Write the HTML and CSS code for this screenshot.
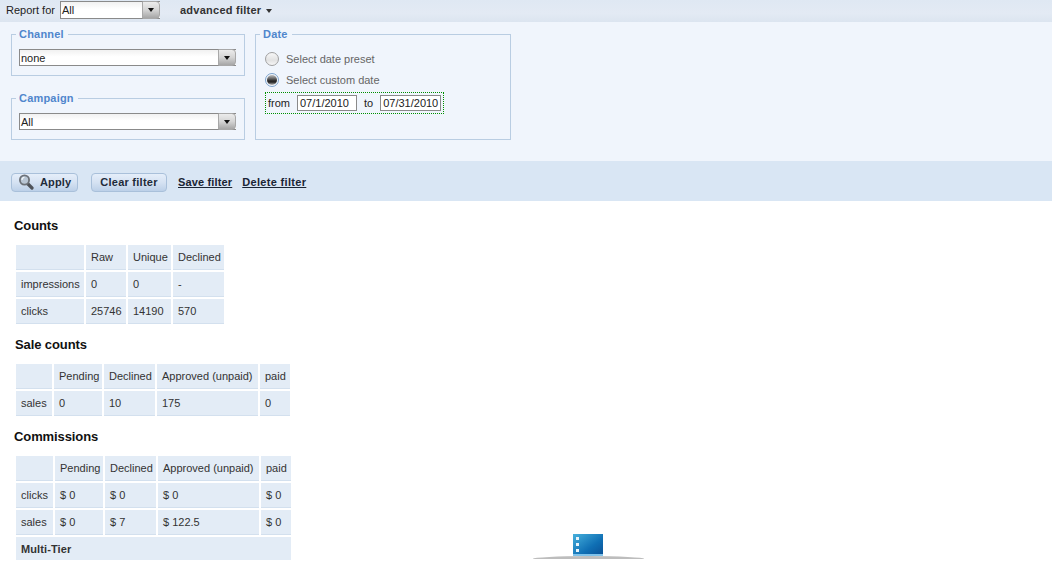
FILE: index.html
```html
<!DOCTYPE html>
<html lang="en">
<head>
<meta charset="utf-8">
<title>Report</title>
<link rel="stylesheet" href="styles.css">
</head>
<body>
<div class="topbar">
  <span class="report-label">Report for</span>
  <div class="combo combo-top"><span class="combo-value">All</span><span class="combo-btn"><i class="caret"></i></span></div>
  <span class="adv">advanced filter <i class="caret adv-caret"></i></span>
</div>
<div class="panel">
  <div class="left-col">
    <fieldset class="fs fs-channel">
      <legend>Channel</legend>
      <div class="combo combo-wide"><span class="combo-value">none</span><span class="combo-btn"><i class="caret"></i></span></div>
    </fieldset>
    <fieldset class="fs fs-campaign">
      <legend>Campaign</legend>
      <div class="combo combo-wide"><span class="combo-value">All</span><span class="combo-btn"><i class="caret"></i></span></div>
    </fieldset>
  </div>
  <fieldset class="fs fs-date">
    <legend>Date</legend>
    <div class="radio-row"><span class="radio"></span><span>Select date preset</span></div>
    <div class="radio-row"><span class="radio radio-on"></span><span>Select custom date</span></div>
    <div class="date-range">
      <span>from</span><span class="date-input d1">07/1/2010</span>
      <span class="to">to</span><span class="date-input d2">07/31/2010</span>
    </div>
  </fieldset>
</div>
<div class="actions">
  <button class="btn btn-apply" type="button">
    <svg class="search" width="16" height="16" viewBox="0 0 16 16"><path d="M9.5 9.5l4.5 4.5" stroke="#4f5359" stroke-width="3.2" stroke-linecap="round"/><circle cx="6.5" cy="6" r="4.6" fill="#b9c6d4" stroke="#6d7279" stroke-width="1.8"/><path d="M4 6a2.6 2.6 0 0 1 2.4-2.6" fill="none" stroke="#f2f6fa" stroke-width="1.2"/></svg>
    <span>Apply</span>
  </button>
  <button class="btn btn-clear" type="button">Clear filter</button>
  <a class="link link-save" href="#">Save filter</a>
  <a class="link link-delete" href="#">Delete filter</a>
</div>
<main class="content">
  <h2 class="h h-counts">Counts</h2>
  <table class="grid t-counts">
    <tr><td class="c1"></td><td class="c2">Raw</td><td class="c3">Unique</td><td class="c4">Declined</td></tr>
    <tr><td>impressions</td><td>0</td><td>0</td><td>-</td></tr>
    <tr><td>clicks</td><td>25746</td><td>14190</td><td>570</td></tr>
  </table>
  <h2 class="h h-sale">Sale counts</h2>
  <table class="grid t-sale">
    <tr><td class="s1"></td><td class="s2">Pending</td><td class="s3">Declined</td><td class="s4">Approved (unpaid)</td><td class="s5">paid</td></tr>
    <tr><td>sales</td><td>0</td><td>10</td><td>175</td><td>0</td></tr>
  </table>
  <h2 class="h h-comm">Commissions</h2>
  <table class="grid t-comm">
    <tr><td class="m1"></td><td class="m2">Pending</td><td class="m3">Declined</td><td class="m4">Approved (unpaid)</td><td class="m5">paid</td></tr>
    <tr><td>clicks</td><td>$ 0</td><td>$ 0</td><td>$ 0</td><td>$ 0</td></tr>
    <tr><td>sales</td><td>$ 0</td><td>$ 7</td><td>$ 122.5</td><td>$ 0</td></tr>
    <tr><td colspan="5" class="tier">Multi-Tier</td></tr>
  </table>
</main>
<div class="loader">
  <svg width="30" height="22" viewBox="0 0 30 22"><defs><linearGradient id="lg" x1="0" y1="0" x2="1" y2="1"><stop offset="0" stop-color="#46b0dc"/><stop offset="0.6" stop-color="#0f6fb4"/><stop offset="1" stop-color="#0a4f94"/></linearGradient></defs><rect width="30" height="22" fill="url(#lg)"/><rect y="20" width="30" height="2" fill="#7fc2ea"/><rect x="3" y="3" width="3" height="3" fill="#e8f4fb"/><rect x="3" y="9" width="3" height="3" fill="#e8f4fb"/><rect x="3" y="15" width="3" height="3" fill="#e8f4fb"/></svg>
  <div class="loader-shadow"></div>
</div>
</body>
</html>
```
FILE: styles.css
```css
* { box-sizing: border-box; }
html, body { margin: 0; padding: 0; }
body {
  width: 1052px; height: 562px; overflow: hidden; position: relative;
  background: #fff; color: #222;
  font: 11px "Liberation Sans", Arial, sans-serif;
}
.topbar {
  height: 22px; display: flex; align-items: center; padding: 0 0 2px 6px;
  background: linear-gradient(#dfe8f3, #e3eaf4 60%, #dce5f0);
}
.report-label { width: 54px; color: #222; }
.combo {
  display: flex; height: 18px; background: linear-gradient(#f1f1f1, #fff 45%, #fff);
  border: 1px solid #8a8a8a; border-right: 0; position: relative;
}
.combo-top { width: 100px; }
.combo-wide { width: 217px; height: 17px; }
.combo-value { flex: 1; padding: 0 0 0 1px; line-height: 16px; color: #222; }
.combo-btn {
  width: 18px; margin: -1px 0; border: 1px solid #a8a8a8; border-radius: 1px 4px 4px 1px;
  background: linear-gradient(#ececec, #d4d4d4 50%, #a6a6a6);
  display: flex; align-items: center; justify-content: center;
}
.caret { display: block; width: 0; height: 0; border: 3.5px solid transparent; border-top: 4px solid #111; border-bottom: 0; }
.adv { margin-left: 20px; font-weight: bold; color: #333; display: flex; align-items: center; gap: 5px; font-size: 11px; letter-spacing: 0.25px; }
.adv-caret { border-width: 3.5px; border-top-width: 4px; border-bottom: 0; border-top-color: #333; margin-top: 1px; }

.panel {
  height: 139px; background: #f0f5fc; display: flex; align-items: flex-start; gap: 10px;
  padding: 5px 0 0 11px;
}
.left-col { display: flex; flex-direction: column; gap: 15px; }
.fs {
  margin: 0; border: 1px solid #b9cde2; padding: 0; min-width: 0;
}
.fs legend {
  margin-left: -3px; padding: 0 4px 0 3px; color: #4f86cc; font-weight: bold; font-size: 11px; line-height: 14px;
  letter-spacing: 0.2px;
}
.fs-channel, .fs-campaign { width: 234px; padding: 8px 0 0 7px; height: 49px; }
.fs-date { width: 256px; height: 113px; padding: 7px 0 0 9px; color: #666; }
.fs .fs-date-legend { margin-left: -5px; }
.fs-date legend { margin-left: -5px; }
.radio-row { display: flex; align-items: center; gap: 7px; height: 21px; }
.radio {
  width: 14px; height: 14px; border-radius: 50%; border: 1px solid #a0a0a0;
  background: linear-gradient(#f7f7f7, #e2e2e2 60%, #f6f6f6);
}
.radio-on {
  border-color: #7ba2cc; background: #f3f7fc; display: flex; align-items: center; justify-content: center;
}
.radio-on::after {
  content: ""; width: 10px; height: 10px; border-radius: 50%;
  background: linear-gradient(#c2c2c2, #333 55%, #222 70%, #bbb);
}
.date-range {
  margin-top: 2px; width: 179px; height: 22px; border: 1px dotted #008f00;
  display: flex; align-items: center; padding-left: 2px; color: #222;
}
.date-input {
  height: 16px; border: 1px solid #8a8a8a; background: #fff; line-height: 14px; padding-left: 2px; color: #222;
}
.d1 { width: 60px; margin-left: 7px; }
.d2 { width: 61px; }
.to { margin: 0 7px 0 7px; }

.actions {
  height: 40px; background: #d9e6f4; display: flex; align-items: center; padding: 2px 0 0 11px;
}
.btn {
  font: bold 11px "Liberation Sans", Arial, sans-serif; color: #1e2b3a; height: 19px; padding: 0;
  border: 1px solid #a9c0da; border-radius: 4px; display: flex; align-items: center;
  background: linear-gradient(#e5eefa, #d5e2f2 50%, #bcd0e8);
  letter-spacing: 0.15px;
}
.btn-apply { width: 67px; padding-left: 6px; gap: 6px; }
.btn-clear { width: 76px; margin-left: 13px; justify-content: center; letter-spacing: 0.25px; }
.link { font-weight: bold; color: #1a2535; letter-spacing: 0.15px; }
.link-save { margin: 0 10px 0 11px; }
.link-delete { letter-spacing: 0.32px; }

.content { padding: 0 0 0 14px; }
.h { margin: 0; font-size: 13px; font-weight: bold; color: #111; line-height: 14px; letter-spacing: -0.1px; }
.h-counts { padding-top: 18px; height: 42px; }
.h-sale { margin-left: 1px; margin-top: 12px; height: 24px; }
.h-comm { margin-top: 12px; height: 24px; }
.grid { border-collapse: separate; border-spacing: 2px; table-layout: fixed; margin-top: 0; }
.grid td {
  height: 25px; padding: 0 5px; background: #e3ecf6; border-bottom: 1px solid #d3e0ee;
  color: #333; line-height: 14px; white-space: nowrap;
}
.t-counts { margin-top: 0; width: 212px; }
.t-sale { width: 278px; }
.t-comm { width: 279px; }
.c1 { width: 68px; } .c2 { width: 40px; } .c3 { width: 43px; } .c4 { width: 51px; }
.s1 { width: 36px; } .s2 { width: 48px; } .s3 { width: 51px; } .s4 { width: 101px; } .s5 { width: 30px; }
.m1 { width: 37px; } .m2 { width: 48px; } .m3 { width: 51px; } .m4 { width: 101px; } .m5 { width: 30px; }
.grid td.tier { height: 23px; font-weight: bold; border-bottom: 0; letter-spacing: 0.1px; }

.loader { position: absolute; left: 533px; top: 534px; width: 111px; display: flex; flex-direction: column; align-items: center; }
.loader svg { display: block; margin-left: -1px; }
.loader-shadow { width: 111px; height: 3px; background: #bdbdbd; border-radius: 50% 50% 0 0 / 100% 100% 0 0; }
```
